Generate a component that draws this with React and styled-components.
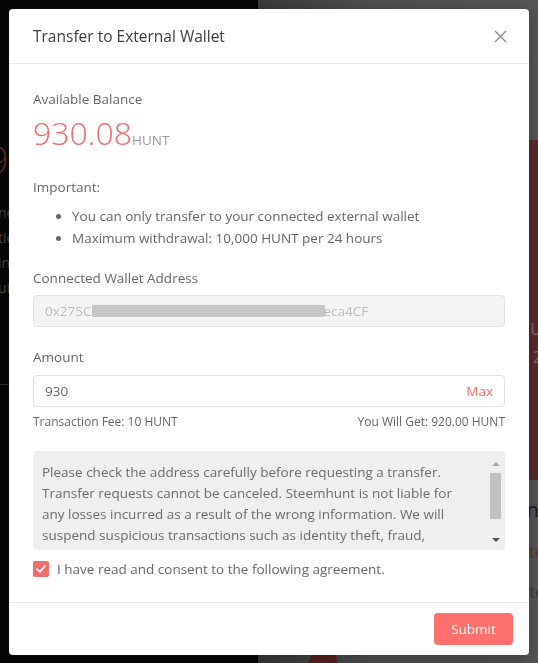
import styled, { createGlobalStyle } from "styled-components";

const GlobalStyle = createGlobalStyle`
  html, body {
    margin: 0;
    padding: 0;
    height: 100%;
  }
  body {
    font-family: "Open Sans", "Liberation Sans", sans-serif;
    background: #050505;
    overflow: hidden;
  }
  * { box-sizing: border-box; }
`;

const agreement = `Please check the address carefully before requesting a transfer. Transfer requests cannot be canceled. Steemhunt is not liable for any losses incurred as a result of the wrong information. We will suspend suspicious transactions such as identity theft, fraud, phone number hijacking or violation of our terms of service, and Steemhunt is not responsible for the losses resulting from such suspension.`;

const App = () => {
  return (
    <>
      <GlobalStyle />
      <Backdrop>
        <LeftPane>
          <BigDigit>9</BigDigit>
          <FaintLines>
            <span>ne</span>
            <span>tie</span>
            <span>in</span>
            <span>ui</span>
          </FaintLines>
          <FaintRule />
        </LeftPane>
        <RightPane>
          <TopStrip />
          <RedPanel>
            <span>U</span>
            <span>2</span>
          </RedPanel>
          <LowerText>
            <span className="dark">n:</span>
            <span className="red">te</span>
            <span>te</span>
          </LowerText>
          <Blob />
        </RightPane>
      </Backdrop>

      <Overlay>
        <Modal>
          <Header>
            <Title>Transfer to External Wallet</Title>
            <CloseButton aria-label="close">
              <svg width="13" height="13" viewBox="0 0 13 13">
                <path d="M1 1 L12 12 M12 1 L1 12" stroke="#8a8a8a" strokeWidth="1.3" fill="none" />
              </svg>
            </CloseButton>
          </Header>

          <Body>
            <Label>Available Balance</Label>
            <Balance>
              930.08<Unit>HUNT</Unit>
            </Balance>

            <Section>
              <Label>Important:</Label>
              <Notes>
                <li>You can only transfer to your connected external wallet</li>
                <li>Maximum withdrawal: 10,000 HUNT per 24 hours</li>
              </Notes>
            </Section>

            <Field $top={19}>
              <Label>Connected Wallet Address</Label>
              <InputBox disabled>
                0x275C<Redacted />eca4CF
              </InputBox>
            </Field>

            <Field $top={20}>
              <Label>Amount</Label>
              <InputBox $top={8}>
                930
                <MaxLink>Max</MaxLink>
              </InputBox>
              <FeeRow>
                <span>Transaction Fee: 10 HUNT</span>
                <span>You Will Get: 920.00 HUNT</span>
              </FeeRow>
            </Field>

            <Agreement>
              <AgreementText>{agreement}</AgreementText>
              <ScrollTrack>
                <ScrollArrow $dir="up" />
                <ScrollThumb />
                <ScrollArrow $dir="down" />
              </ScrollTrack>
            </Agreement>

            <CheckRow>
              <CheckBox>
                <svg width="10" height="8" viewBox="0 0 10 8">
                  <path d="M1 4.2 L3.8 6.8 L9 1.2" stroke="#fff" strokeWidth="1.8" fill="none" strokeLinecap="round" strokeLinejoin="round" />
                </svg>
              </CheckBox>
              I have read and consent to the following agreement.
            </CheckRow>
          </Body>

          <Footer>
            <SubmitButton>Submit</SubmitButton>
          </Footer>
        </Modal>
      </Overlay>
    </>
  );
};

const Backdrop = styled.div`
  display: flex;
  height: 663px;
  width: 538px;
`;

const LeftPane = styled.div`
  width: 258px;
  background: #050505;
  display: flex;
  flex-direction: column;
  padding-top: 140px;
`;

const BigDigit = styled.div`
  font-size: 40px;
  font-weight: 300;
  color: #5a2626;
  line-height: 40px;
  margin-left: -14px;
`;

const FaintLines = styled.div`
  display: flex;
  flex-direction: column;
  margin-top: 20px;
  margin-left: -2px;
  font-size: 14px;
  line-height: 25px;
  color: #4a4a4a;
`;

const FaintRule = styled.div`
  margin-top: 84px;
  height: 1px;
  background: #333;
`;

const RightPane = styled.div`
  flex: 1;
  background: linear-gradient(90deg, #3a3a3a 0%, #4f4f4f 40%, #565656 100%);
  display: flex;
  flex-direction: column;
  align-items: flex-end;
`;

const TopStrip = styled.div`
  height: 140px;
  width: 100%;
`;

const RedPanel = styled.div`
  width: 100%;
  height: 340px;
  background: #5b2a2c;
  display: flex;
  flex-direction: column;
  align-items: flex-end;
  padding-top: 178px;
  gap: 6px;
  font-size: 16px;
  color: #8a6a6a;
  span { margin-right: -4px; }
`;

const LowerText = styled.div`
  display: flex;
  flex-direction: column;
  align-items: flex-end;
  padding-top: 16px;
  gap: 18px;
  font-size: 16px;
  color: #3a3a3a;
  .dark { color: #1a1a1a; font-size: 20px; }
  .red { color: #7a2a2a; }
  span { margin-right: -6px; }
`;

const Blob = styled.div`
  position: absolute;
  left: 308px;
  top: 650px;
  width: 30px;
  height: 30px;
  border-radius: 50%;
  background: #5a2020;
`;

const Overlay = styled.div`
  position: fixed;
  inset: 0;
  padding: 9px;
  display: flex;
  justify-content: center;
  align-items: flex-start;
`;

const Modal = styled.div`
  width: 520px;
  height: 646px;
  background: #fff;
  border-radius: 4px;
  display: flex;
  flex-direction: column;
  box-shadow: 0 4px 16px rgba(0, 0, 0, 0.3);
`;

const Header = styled.div`
  height: 55px;
  padding: 0 22px 0 24px;
  display: flex;
  align-items: center;
  justify-content: space-between;
  border-bottom: 1px solid #e8e8e8;
`;

const Title = styled.div`
  font-size: 15.5px;
  color: #3c3c3c;
`;

const CloseButton = styled.button`
  border: 0;
  background: none;
  padding: 0;
  width: 13px;
  height: 13px;
  display: flex;
`;

const Body = styled.div`
  flex: 1;
  padding: 25px 24px 0;
  display: flex;
  flex-direction: column;
`;

const Label = styled.div`
  font-size: 13.5px;
  line-height: 20px;
  color: #666;
`;

const Balance = styled.div`
  margin-top: 4px;
  font-size: 32px;
  font-weight: 300;
  line-height: 40px;
  color: #f06b6b;
`;

const Unit = styled.span`
  font-size: 13.5px;
  font-weight: 400;
  color: #999;
`;

const Section = styled.div`
  margin-top: 17px;
`;

const Notes = styled.ul`
  margin: 8px 0 0;
  padding-left: 39px;
  font-size: 13.5px;
  line-height: 22px;
  color: #666;
`;

const Field = styled.div`
  margin-top: ${(p) => p.$top}px;
  display: flex;
  flex-direction: column;
`;

const InputBox = styled.div`
  margin-top: ${(p) => p.$top ?? 7}px;
  height: 32px;
  border: 1px solid #e2e2e2;
  border-radius: 4px;
  padding: 0 11px;
  display: flex;
  align-items: center;
  font-size: 13.5px;
  background: ${(p) => (p.disabled ? "#f4f4f4" : "#fff")};
  color: ${(p) => (p.disabled ? "#bbb" : "#666")};
`;

const Redacted = styled.span`
  display: inline-block;
  width: 233px;
  height: 12px;
  margin: 0 -2px 0 1px;
  background: #c6c6c6;
`;

const MaxLink = styled.span`
  margin-left: auto;
  color: #f06b6b;
`;

const FeeRow = styled.div`
  margin-top: 6px;
  display: flex;
  justify-content: space-between;
  font-size: 12px;
  line-height: 17px;
  color: #666;
`;

const Agreement = styled.div`
  margin-top: 21px;
  height: 99px;
  overflow: hidden;
  background: #efefef;
  border-radius: 4px;
  padding: 0 3px 0 9px;
  display: flex;
  gap: 24px;
`;

const AgreementText = styled.p`
  flex: 1;
  margin: 0;
  padding-top: 11px;
  font-size: 13.5px;
  line-height: 21px;
  color: #6a6a6a;
`;

const ScrollTrack = styled.div`
  flex: 0 0 13px;
  margin: 6px 0 3px;
  display: flex;
  flex-direction: column;
  align-items: center;
`;

const ScrollArrow = styled.span`
  width: 0;
  height: 0;
  margin: 5px 0;
  border-left: 4px solid transparent;
  border-right: 4px solid transparent;
  ${(p) =>
    p.$dir === "up"
      ? "border-bottom: 4px solid #a8a8a8;"
      : "border-top: 4px solid #505050;"}
`;

const ScrollThumb = styled.div`
  width: 11px;
  height: 46px;
  margin-top: 2px;
  margin-bottom: auto;
  background: #c1c1c1;
`;

const CheckRow = styled.label`
  margin-top: 10px;
  display: flex;
  align-items: center;
  gap: 8px;
  font-size: 13.5px;
  color: #666;
`;

const CheckBox = styled.span`
  width: 16px;
  height: 16px;
  border-radius: 2px;
  background: #f06b6b;
  display: flex;
  align-items: center;
  justify-content: center;
`;

const Footer = styled.div`
  border-top: 1px solid #e8e8e8;
  padding: 10px 16px 10px;
  display: flex;
  justify-content: flex-end;
`;

const SubmitButton = styled.button`
  width: 79px;
  height: 32px;
  border: 0;
  border-radius: 4px;
  background: #ff6f6b;
  color: #fff;
  font-family: inherit;
  font-size: 13.5px;
`;

export default App;
